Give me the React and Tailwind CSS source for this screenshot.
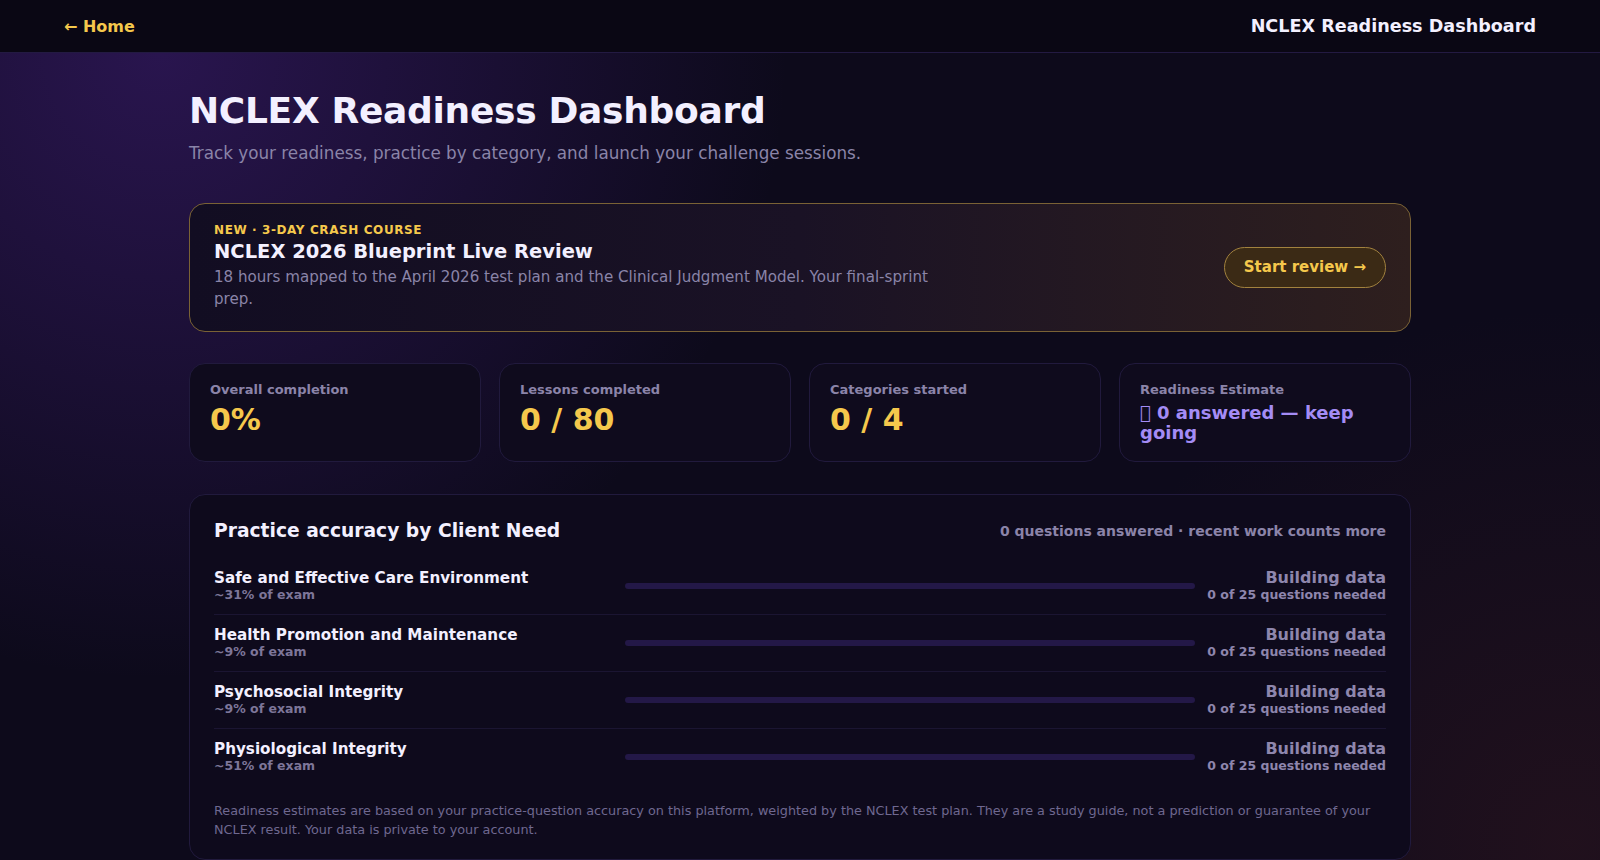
import React from "react";

const rows = [
  { name: "Safe and Effective Care Environment", pct: "~31% of exam" },
  { name: "Health Promotion and Maintenance", pct: "~9% of exam" },
  { name: "Psychosocial Integrity", pct: "~9% of exam" },
  { name: "Physiological Integrity", pct: "~51% of exam" },
];

function StatCard({ label, children }) {
  return (
    <div className="rounded-2xl border border-[#211a3d] bg-[#0f0b1d] px-5 pt-[17px] pb-[18px]">
      <div className="text-[13px] font-bold leading-[18px] text-[#8b84a9]">{label}</div>
      <div className="mt-[3px]">{children}</div>
    </div>
  );
}

export default function App() {
  return (
    <div
      className="min-h-screen bg-[#0d0a1b] bg-[radial-gradient(circle_at_10%_6%,rgba(80,36,150,0.42),transparent_38%),radial-gradient(circle_at_98%_98%,rgba(84,34,34,0.28),transparent_30%)] text-white"
      style={{ fontFamily: '"DejaVu Sans", Verdana, sans-serif' }}
    >
      <header className="flex h-[53px] items-center justify-between border-b border-[#231a42] bg-[#0a0714] px-16 pt-px">
        <a className="text-[16px] font-bold text-[#f5c84c]">← Home</a>
        <div className="text-[17.6px] font-bold text-[#f3f0ff]">NCLEX Readiness Dashboard</div>
      </header>

      <main className="mx-auto w-[1222px] pt-[38px]">
        <h1 className="text-[36px] font-bold leading-[40px] tracking-[-0.3px] text-[#f3f0ff]">NCLEX Readiness Dashboard</h1>
        <p className="mt-[9px] text-[16.8px] leading-[26px] text-[#8a84a8]">
          Track your readiness, practice by category, and launch your challenge sessions.
        </p>

        <section className="mt-[37px] flex items-center justify-between rounded-2xl border border-[#7a6235] bg-[linear-gradient(90deg,#120d22_0%,#1a1225_50%,#2e1f1e_100%)] px-6 pt-[18px] pb-[21px]">
          <div>
            <div className="text-[12px] font-bold uppercase leading-[16px] tracking-wider text-[#f5c84c]">
              NEW · 3-DAY CRASH COURSE
            </div>
            <div className="mt-px text-[19.5px] font-bold leading-[26px] text-[#f3f0ff]">
              NCLEX 2026 Blueprint Live Review
            </div>
            <p className="mt-px max-w-[736px] text-[15.1px] leading-[22px] text-[#8a84a8]">
              18 hours mapped to the April 2026 test plan and the Clinical Judgment Model. Your final-sprint prep.
            </p>
          </div>
          <button className="mt-[2px] flex h-[41px] items-center rounded-full border border-[#a2823e] bg-[#3b2a15] px-[19px] text-[15px] font-bold text-[#f5c84c]">
            Start review →
          </button>
        </section>

        <div className="mt-[31px] grid grid-cols-4 gap-[18px]">
          <StatCard label="Overall completion">
            <div className="text-[30px] font-bold leading-[36px] text-[#f5c84c]">0%</div>
          </StatCard>
          <StatCard label="Lessons completed">
            <div className="text-[30px] font-bold leading-[36px] text-[#f5c84c]">0 / 80</div>
          </StatCard>
          <StatCard label="Categories started">
            <div className="text-[30px] font-bold leading-[36px] text-[#f5c84c]">0 / 4</div>
          </StatCard>
          <StatCard label="Readiness Estimate">
            <div className="pt-px text-[18px] font-bold leading-[20px] text-[#a48cf5]">{"\u{E000}"} 0 answered — keep going</div>
          </StatCard>
        </div>

        <section className="mt-8 rounded-2xl border border-[#211a3d] bg-[#0e0a1c] px-6 pt-6 pb-5">
          <div className="mb-[15px] flex items-center justify-between">
            <h2 className="text-[18.7px] font-bold leading-[24px] text-[#f3f0ff]">Practice accuracy by Client Need</h2>
            <div className="text-[14px] font-bold text-[#8b84a9]">0 questions answered · recent work counts more</div>
          </div>

          <div className="divide-y divide-[#1b1532]">
            {rows.map((r) => (
              <div key={r.name} className="flex items-center gap-3 py-[11px]">
                <div className="w-[399px] shrink-0">
                  <div className="text-[15.2px] font-bold leading-[18px] text-[#f3f0ff]">{r.name}</div>
                  <div className="text-[12.5px] font-bold leading-[16px] text-[#7d7699]">{r.pct}</div>
                </div>
                <div className="h-[6px] flex-1 rounded-full bg-[#231847]" />
                <div className="w-[179px] shrink-0 text-right">
                  <div className="text-[16px] font-bold leading-[18px] text-[#8e86ad]">Building data</div>
                  <div className="text-[12.5px] font-bold leading-[16px] text-[#8e86ad]">0 of 25 questions needed</div>
                </div>
              </div>
            ))}
          </div>

          <p className="mt-[17px] text-[12.8px] leading-[18.5px] text-[#6f6890]">
            Readiness estimates are based on your practice-question accuracy on this platform, weighted by the NCLEX test plan. They are a study guide, not a prediction or guarantee of your NCLEX result. Your data is private to your account.
          </p>
        </section>
      </main>
    </div>
  );
}
